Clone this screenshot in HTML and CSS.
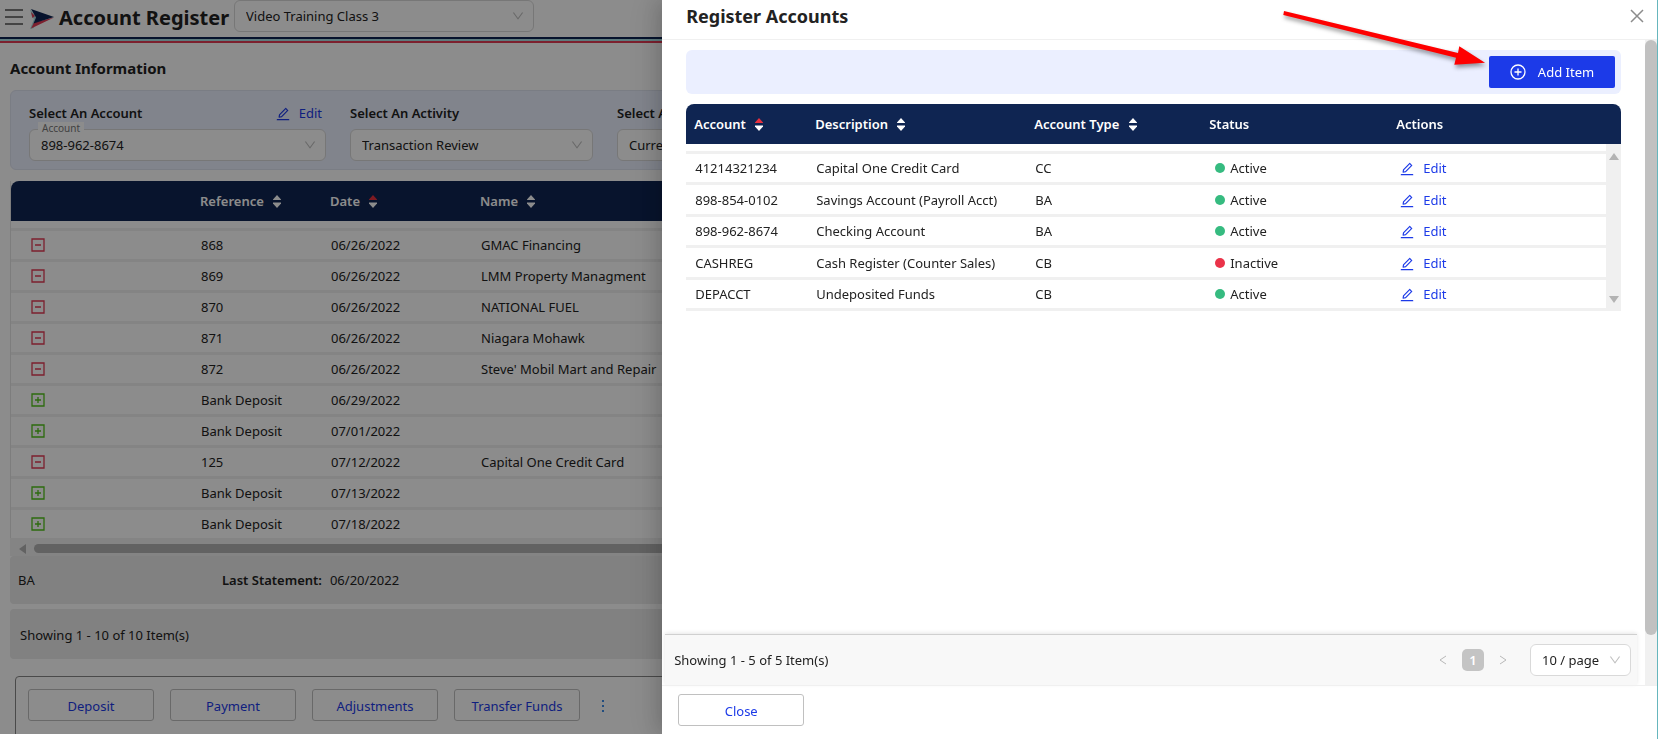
FILE: index.html
```html
<!DOCTYPE html>
<html lang="en">
<head>
  <meta charset="UTF-8">
  <title>Account Register</title>
  <link rel="stylesheet" href="styles.css">
</head>
<body>
  <!-- shared icons -->
  <svg class="sprite" aria-hidden="true">
    <symbol id="icon-edit" viewBox="64 64 896 896"><path d="M257.7 752c2 0 4-.2 6-.5L431.9 722c2-.4 3.9-1.3 5.3-2.8l423.9-423.9a9.96 9.96 0 000-14.1L694.9 114.9c-1.9-1.9-4.4-2.9-7.1-2.9s-5.2 1-7.1 2.9L256.8 538.8c-1.5 1.5-2.4 3.3-2.8 5.3l-29.5 168.2a33.5 33.5 0 009.4 29.8c6.6 6.4 14.9 9.9 23.8 9.9zm67.4-174.4L687.8 215l73.3 73.3-362.7 362.6-88.9 15.7 15.6-89zM880 836H144c-17.7 0-32 14.3-32 32v36c0 4.4 3.6 8 8 8h784c4.4 0 8-3.6 8-8v-36c0-17.7-14.3-32-32-32z"/></symbol>
    <symbol id="icon-down" viewBox="64 64 896 896"><path d="M884 256h-75c-5.1 0-9.9 2.5-12.9 6.6L512 654.2 227.9 262.6c-3-4.1-7.8-6.6-12.9-6.6h-75c-6.5 0-10.3 7.4-6.5 12.7l352.6 486.1c12.8 17.6 39 17.6 51.7 0l352.6-486.1c3.9-5.3.1-12.7-6.4-12.7z"/></symbol>
    <symbol id="icon-sort" viewBox="0 0 8 13"><path d="M4 0L8 4.500V5H0V4.500Z"/><path d="M0 7.500H8V8.500L4 13L0 8.500Z"/></symbol>
    <symbol id="icon-sort-asc" viewBox="0 0 8 13"><path fill="#e8313f" d="M4 0L8 4.500V5H0V4.500Z"/><path d="M0 7.500H8V8.500L4 13L0 8.500Z"/></symbol>
    <symbol id="icon-minus" viewBox="0 0 14 14"><path fill="none" stroke="#e23b55" stroke-width="1.300" d="M1 1H13V13H1ZM4 7H10"/></symbol>
    <symbol id="icon-plus" viewBox="0 0 14 14"><path fill="none" stroke="#52c41a" stroke-width="1.300" d="M1 1H13V13H1ZM4 7H10M7 4V10"/></symbol>
  </svg>

  <div class="page">
    <header class="topbar">
      <button class="menu" aria-label="Menu"><span></span><span></span><span></span></button>
      <svg class="logo" viewBox="0 0 24 20" aria-hidden="true">
        <path fill="#a9dfe3" d="M0 0L2 8L4 10L0 20L4 19L6 8Z"/>
        <path fill="#e23b55" d="M1 3L5 7L2.500 9ZM1 19.500L4 13.500L24 8.500Z"/>
        <path fill="#0e2452" d="M1 0L24 8L3.500 14.500L6 8.500Z"/>
      </svg>
      <h1>Account Register</h1>
      <div class="select class-select">
        <select aria-label="Class"><option>Video Training Class 3</option></select>
        <svg><use href="#icon-down"/></svg>
      </div>
    </header>
    <div class="stripes"></div>

    <main>
      <h2>Account Information</h2>
      <section class="filters">
        <div class="field account">
          <div class="field-head">
            <label for="account">Select An Account</label>
            <a href="#" class="edit"><svg><use href="#icon-edit"/></svg>Edit</a>
          </div>
          <div class="select">
            <span class="float-label">Account</span>
            <select id="account"><option>898-962-8674</option></select>
            <svg><use href="#icon-down"/></svg>
          </div>
        </div>
        <div class="field">
          <div class="field-head"><label for="activity">Select An Activity</label></div>
          <div class="select">
            <select id="activity"><option>Transaction Review</option></select>
            <svg><use href="#icon-down"/></svg>
          </div>
        </div>
        <div class="field">
          <div class="field-head"><label for="period">Select A Period</label></div>
          <div class="select">
            <select id="period"><option>Current</option></select>
            <svg><use href="#icon-down"/></svg>
          </div>
        </div>
      </section>

      <table class="grid transactions">
        <colgroup><col class="c-icon"><col class="c-ref"><col class="c-date"><col></colgroup>
        <thead>
          <tr>
            <th></th>
            <th>Reference <svg><use href="#icon-sort"/></svg></th>
            <th>Date <svg><use href="#icon-sort-asc"/></svg></th>
            <th>Name <svg><use href="#icon-sort"/></svg></th>
          </tr>
        </thead>
        <tbody>
          <tr class="peek"><td colspan="4"></td></tr>
          <tr><td><svg><use href="#icon-minus"/></svg></td><td>868</td><td>06/26/2022</td><td>GMAC Financing</td></tr>
          <tr><td><svg><use href="#icon-minus"/></svg></td><td>869</td><td>06/26/2022</td><td>LMM Property Managment</td></tr>
          <tr><td><svg><use href="#icon-minus"/></svg></td><td>870</td><td>06/26/2022</td><td>NATIONAL FUEL</td></tr>
          <tr><td><svg><use href="#icon-minus"/></svg></td><td>871</td><td>06/26/2022</td><td>Niagara Mohawk</td></tr>
          <tr><td><svg><use href="#icon-minus"/></svg></td><td>872</td><td>06/26/2022</td><td>Steve' Mobil Mart and Repair</td></tr>
          <tr><td><svg><use href="#icon-plus"/></svg></td><td>Bank Deposit</td><td>06/29/2022</td><td></td></tr>
          <tr><td><svg><use href="#icon-plus"/></svg></td><td>Bank Deposit</td><td>07/01/2022</td><td></td></tr>
          <tr><td><svg><use href="#icon-minus"/></svg></td><td>125</td><td>07/12/2022</td><td>Capital One Credit Card</td></tr>
          <tr><td><svg><use href="#icon-plus"/></svg></td><td>Bank Deposit</td><td>07/13/2022</td><td></td></tr>
          <tr><td><svg><use href="#icon-plus"/></svg></td><td>Bank Deposit</td><td>07/18/2022</td><td></td></tr>
        </tbody>
      </table>
      <div class="hscroll"><i></i><b></b></div>

      <div class="summary"><span class="kind">BA</span><strong>Last Statement:</strong><span>06/20/2022</span></div>
      <div class="count">Showing 1 - 10 of 10 Item(s)</div>

      <div class="toolbar">
        <button class="btn">Deposit</button>
        <button class="btn">Payment</button>
        <button class="btn">Adjustments</button>
        <button class="btn">Transfer Funds</button>
        <button class="more" aria-label="More"><i></i><i></i><i></i></button>
      </div>
    </main>
    <div class="mask"></div>
    <div class="drawer-shadow"></div>
  </div>

  <aside class="drawer">
    <header class="drawer-header">
      <h2>Register Accounts</h2>
      <button class="close" aria-label="Close drawer">
        <svg viewBox="0 0 14 14"><path d="M1 1L13 13M13 1L1 13"/></svg>
      </button>
    </header>

    <div class="drawer-body">
      <div class="drawer-content">
        <div class="list">
          <div class="actions">
            <button class="add">
              <svg viewBox="0 0 16 16"><circle cx="8" cy="8" r="7"/><path d="M4.500 8H11.500M8 4.500V11.500"/></svg>
              Add Item
            </button>
          </div>
          <div class="table-wrap">
            <table class="grid accounts">
              <colgroup><col class="c-account"><col class="c-desc"><col class="c-type"><col class="c-status"><col></colgroup>
              <thead>
                <tr>
                  <th>Account <svg><use href="#icon-sort-asc"/></svg></th>
                  <th>Description <svg><use href="#icon-sort"/></svg></th>
                  <th>Account Type <svg><use href="#icon-sort"/></svg></th>
                  <th>Status</th>
                  <th>Actions</th>
                </tr>
              </thead>
              <tbody>
                <tr class="peek"><td colspan="5"></td></tr>
                <tr><td>41214321234</td><td>Capital One Credit Card</td><td>CC</td><td><span class="status">Active</span></td><td><a href="#" class="edit"><svg><use href="#icon-edit"/></svg>Edit</a></td></tr>
                <tr><td>898-854-0102</td><td>Savings Account (Payroll Acct)</td><td>BA</td><td><span class="status">Active</span></td><td><a href="#" class="edit"><svg><use href="#icon-edit"/></svg>Edit</a></td></tr>
                <tr><td>898-962-8674</td><td>Checking Account</td><td>BA</td><td><span class="status">Active</span></td><td><a href="#" class="edit"><svg><use href="#icon-edit"/></svg>Edit</a></td></tr>
                <tr><td>CASHREG</td><td>Cash Register (Counter Sales)</td><td>CB</td><td><span class="status inactive">Inactive</span></td><td><a href="#" class="edit"><svg><use href="#icon-edit"/></svg>Edit</a></td></tr>
                <tr><td>DEPACCT</td><td>Undeposited Funds</td><td>CB</td><td><span class="status">Active</span></td><td><a href="#" class="edit"><svg><use href="#icon-edit"/></svg>Edit</a></td></tr>
              </tbody>
            </table>
            <div class="vscroll"><i class="up"></i><i class="down"></i></div>
          </div>
        </div>

        <div class="pager">
          <span class="total">Showing 1 - 5 of 5 Item(s)</span>
          <button class="step" aria-label="Previous page"><svg viewBox="0 0 8 10"><path d="M7 1L1 5L7 9"/></svg></button>
          <button class="current">1</button>
          <button class="step" aria-label="Next page"><svg viewBox="0 0 8 10"><path d="M1 1L7 5L1 9"/></svg></button>
          <div class="select page-size">
            <select aria-label="Page size"><option>10 / page</option></select>
            <svg><use href="#icon-down"/></svg>
          </div>
        </div>
      </div>
      <div class="scrollbar"><i></i></div>
    </div>

    <footer class="drawer-footer"><button class="btn">Close</button></footer>

    <!-- pointer to the Add Item button -->
    <svg class="pointer" viewBox="0 0 210 64" aria-hidden="true">
      <path d="M5 3L179 45L180.300 38.300L206 54.700L175.300 56.700L177 49.700L4.300 7Z"/>
    </svg>
  </aside>
</body>
</html>
```
FILE: styles.css
```css
* {
  box-sizing: border-box;
}

body {
  margin: 0;
  background: #fff;
  color: #222;
  font-family: "Segoe UI", "Noto Sans", "Open Sans", sans-serif;
  font-size: 13px;
  line-height: 20px;
  overflow: hidden;
}

h1, h2 {
  margin: 0;
  font-weight: 700;
}

button, select {
  font: inherit;
  color: inherit;
}

button {
  border: none;
  background: none;
  padding: 0;
  cursor: pointer;
}

.sprite {
  position: absolute;
  width: 0;
  height: 0;
}

/* register page */

.page {
  position: relative;
  height: calc(100vh - 5px);
  overflow: hidden;
}

.mask {
  position: absolute;
  inset: 0;
  background: rgba(0, 0, 0, 0.45);
}

.topbar {
  display: flex;
  align-items: center;
  height: 37px;
  padding: 0 5px 5px;
}

.menu {
  display: flex;
  flex-direction: column;
  gap: 5px;
  width: 18px;
  padding-top: 2px;
}

.menu span {
  height: 2px;
  background: #7c7c7c;
}

.logo {
  width: 24px;
  height: 20px;
  margin: 5px 5px 0 7px;
}

.topbar h1 {
  width: 175px;
  padding-top: 4px;
  font-size: 20px;
  white-space: nowrap;
}

.class-select {
  width: 300px;
}

.stripes {
  height: 6px;
  background: linear-gradient(#0e2452 0 2px, #a9dfe3 2px 4px, #e23b55 4px 6px);
}

main {
  padding: 15px 10px 0;
}

main h2 {
  font-size: 15px;
}

.select {
  position: relative;
}

.select select {
  display: block;
  width: 100%;
  height: 32px;
  padding: 0 11px;
  border: 1px solid #d9d9d9;
  border-radius: 6px;
  background: #fff;
  appearance: none;
}

.select svg {
  position: absolute;
  top: 10px;
  right: 10px;
  width: 12px;
  height: 12px;
  fill: #bfbfbf;
  pointer-events: none;
}

.float-label {
  position: absolute;
  top: -7px;
  left: 9px;
  padding: 0 4px;
  background: #fff;
  color: #777;
  font-size: 10px;
  line-height: 12px;
}

.filters {
  display: flex;
  gap: 24px;
  height: 80px;
  margin-top: 12px;
  padding: 12px 18px;
  border: 1px solid #dfe3f0;
  border-radius: 6px;
  background: #ebf0ff;
}

.field {
  width: 243px;
}

.field.account {
  width: 297px;
}

.field-head {
  display: flex;
  align-items: flex-start;
  justify-content: space-between;
  height: 26px;
  padding-right: 4px;
}

.field-head label {
  font-weight: 600;
}

.edit {
  display: inline-flex;
  align-items: center;
  gap: 9px;
  color: #1c3ae8;
  text-decoration: none;
}

.edit svg {
  width: 14px;
  height: 14px;
  margin-top: 2px;
  fill: #1c3ae8;
}

/* tables */

.grid {
  width: 100%;
  table-layout: fixed;
  border-spacing: 0;
  text-align: left;
}

.grid th {
  height: 40px;
  padding: 0 8px;
  background: #0f2552;
  color: #fff;
  font-weight: 600;
  white-space: nowrap;
}

.grid th:first-child {
  border-top-left-radius: 8px;
}

.grid th:last-child {
  border-top-right-radius: 8px;
}

.grid th svg {
  width: 8px;
  height: 13px;
  margin-left: 6px;
  fill: #fff;
  vertical-align: -2px;
}

.grid td {
  height: 31px;
  padding: 0 9px;
  border-bottom: 3px solid #f0f0f0;
  white-space: nowrap;
}

.grid .peek td {
  height: 10px;
}

.transactions {
  margin-top: 11px;
  border-left: 1px solid #e4e4e4;
}

.transactions td svg {
  display: block;
  width: 14px;
  height: 14px;
  margin-left: 11px;
}

.c-icon { width: 181px; }
.c-ref { width: 130px; }
.c-date { width: 150px; }

.transactions tr:last-child td {
  height: 28px;
  border-bottom: none;
}

.hscroll {
  display: flex;
  align-items: center;
  gap: 8px;
  height: 18px;
  padding: 3px 9px 0;
  background: #f1f1f1;
}

.hscroll i {
  border: 5px solid transparent;
  border-left: none;
  border-right: 7px solid #b3b3b3;
}

.hscroll b {
  flex: 1;
  height: 9px;
  border-radius: 5px;
  background: #b3b3b3;
}

.summary, .count {
  display: flex;
  align-items: center;
  border-radius: 4px;
  background: #ebebeb;
}

.summary {
  height: 48px;
  padding: 0 8px;
}

.summary .kind {
  width: 204px;
}

.summary strong {
  margin-right: 8px;
  font-weight: 600;
}

.count {
  height: 50px;
  margin-top: 5px;
  padding: 2px 10px 0;
}

.toolbar {
  display: flex;
  gap: 16px;
  height: 70px;
  margin: 17px 5px 0;
  padding: 12px;
  border: 1px solid #888;
  border-radius: 4px;
}

.btn {
  width: 126px;
  height: 32px;
  padding-top: 2px;
  border: 1px solid #c0c0c0;
  border-radius: 3px;
  background: #fff;
  color: #1c3ae8;
}

.more {
  display: flex;
  flex-direction: column;
  align-items: center;
  justify-content: center;
  gap: 3px;
  width: 14px;
  height: 32px;
  padding-top: 2px;
}

.more i {
  width: 2px;
  height: 2px;
  background: #3c8ce8;
}

/* drawer */

.drawer-shadow {
  position: absolute;
  top: 0;
  right: 0;
  bottom: 0;
  width: 60%;
  box-shadow: -6px 0 16px rgba(0, 0, 0, 0.12), -9px 0 28px rgba(0, 0, 0, 0.08);
}

.drawer {
  position: fixed;
  top: 0;
  right: 0;
  bottom: 0;
  display: flex;
  flex-direction: column;
  box-sizing: content-box;
  width: 60%;
  border-right: 1px solid #66b6bd;
  background: #fff;
}

.drawer-header {
  display: flex;
  align-items: center;
  justify-content: space-between;
  height: 40px;
  padding: 0 13px 7px 24px;
  border-bottom: 1px solid #f0f0f0;
}

.drawer-header h2 {
  font-size: 18px;
}

.close svg {
  display: block;
  width: 14px;
  height: 14px;
  fill: none;
  stroke: #8c8c8c;
  stroke-width: 1.5;
}

.drawer-body {
  display: flex;
  flex: 1;
}

.drawer-content {
  display: flex;
  flex: 1;
  flex-direction: column;
  padding: 10px 8px 0 3px;
}

.list {
  flex: 1;
  padding: 0 16px 0 21px;
}

.actions {
  display: flex;
  justify-content: flex-end;
  padding: 6px;
  margin-bottom: 10px;
  border-radius: 6px;
  background: #ebefff;
}

.add {
  display: flex;
  align-items: center;
  justify-content: center;
  gap: 12px;
  width: 126px;
  height: 32px;
  border-radius: 2px;
  background: #1c3ae8;
  color: #fff;
}

.add svg {
  width: 16px;
  height: 16px;
  fill: none;
  stroke: #fff;
  stroke-width: 1.3;
}

.table-wrap {
  position: relative;
}

.c-account { width: 121px; }
.c-desc { width: 219px; }
.c-type { width: 175px; }
.c-status { width: 187px; }

.accounts tbody tr:nth-child(odd):not(.peek) td {
  height: 32px;
}

.accounts td .edit {
  display: flex;
  padding-left: 3px;
}

.status {
  display: flex;
  align-items: center;
  gap: 5px;
  padding-left: 5px;
}

.status::before {
  content: "";
  width: 10px;
  height: 10px;
  border-radius: 50%;
  background: #36bb80;
}

.status.inactive::before {
  background: #ea3349;
}

.vscroll {
  position: absolute;
  top: 40px;
  right: 0;
  bottom: 0;
  display: flex;
  flex-direction: column;
  align-items: center;
  justify-content: space-between;
  width: 15px;
  padding: 9px 0 8px;
  background: #f0f0f0;
}

.vscroll i {
  border: 5px solid transparent;
}

.vscroll .up {
  border-top: none;
  border-bottom: 7px solid #b3b3b3;
}

.vscroll .down {
  border-bottom: none;
  border-top: 7px solid #b3b3b3;
}

.pager {
  display: flex;
  align-items: center;
  height: 51px;
  padding: 0 6px 0 9px;
  border-top: 1px solid #d0d0d0;
  background: #f8f8f8;
  box-shadow: 0 -1px 4px rgba(0, 0, 0, 0.1);
}

.total {
  flex: 1;
}

.step svg {
  display: block;
  width: 8px;
  height: 10px;
  fill: none;
  stroke: #b8b8b8;
}

.current {
  width: 22px;
  height: 22px;
  margin: 0 15px;
  border-radius: 5px;
  background: #c4c4c4;
  color: #fff;
  font-weight: 600;
  line-height: 22px;
}

.page-size {
  width: 101px;
  margin-left: 23px;
}

.scrollbar {
  width: 12px;
  background: #f1f1f1;
}

.scrollbar i {
  display: block;
  height: calc(100% - 50px);
  border-radius: 6px;
  background: #c1c1c1;
}

.drawer-footer {
  padding: 8px 16px 13px;
  border-top: 1px solid #f0f0f0;
}

.drawer-footer .btn {
  display: block;
}

.pointer {
  position: absolute;
  top: 8px;
  right: 168px;
  width: 210px;
  height: 64px;
  fill: #fe0000;
  filter: drop-shadow(1px 3px 2px rgba(0, 0, 0, 0.4));
  pointer-events: none;
}
```
